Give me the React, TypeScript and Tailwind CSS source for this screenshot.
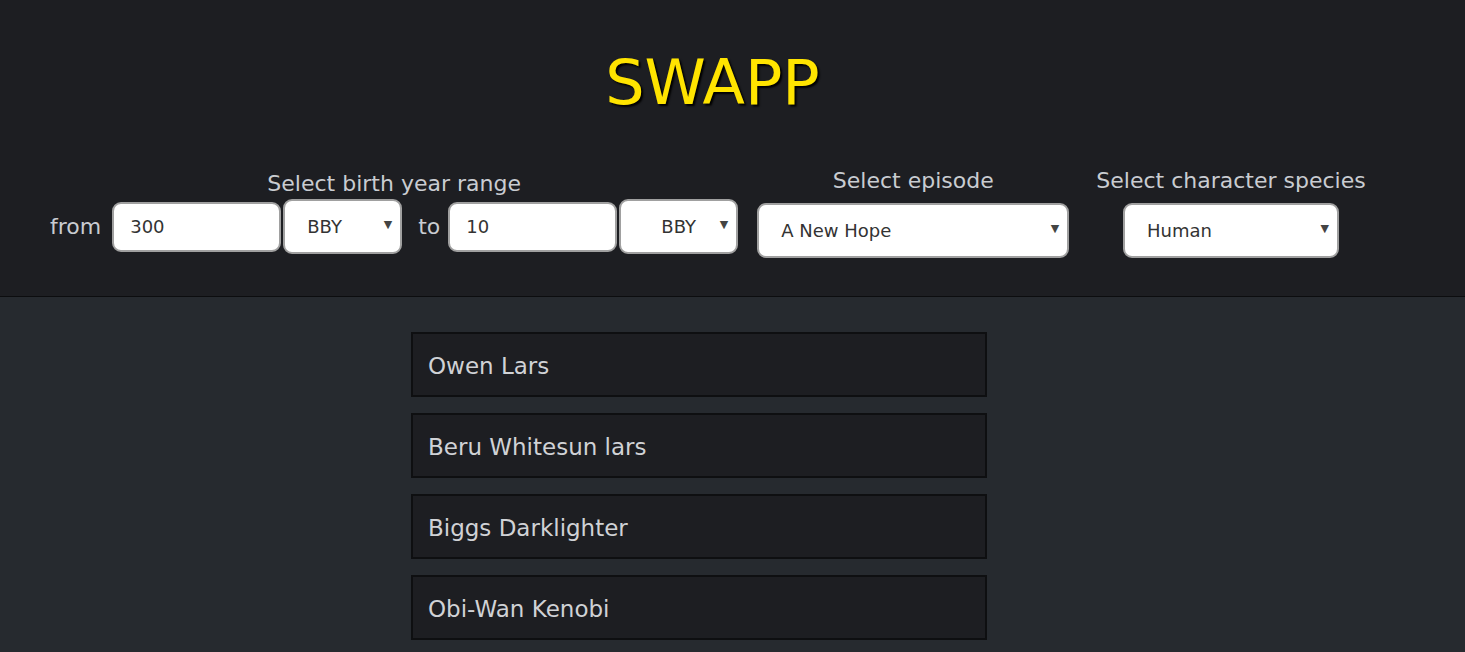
const FONT = "font-['Comic_Sans_MS','DejaVu_Sans',sans-serif]";

const PEOPLE = ['Owen Lars', 'Beru Whitesun lars', 'Biggs Darklighter', 'Obi-Wan Kenobi'];

function Select({ value, className }: { value: string; className: string }) {
  return (
    <div className={`relative flex items-center rounded-[9px] border-2 border-[#a0a0a0] bg-white text-[18px] text-[#333] ${className}`}>
      <span>{value}</span>
      <span className="absolute right-[8px] top-1/2 -translate-y-[58%] text-[11px] text-[#444]">▼</span>
    </div>
  );
}

function Input({ value }: { value: string }) {
  return (
    <div className="flex h-[50px] w-[169px] items-center rounded-[9px] border-2 border-[#a0a0a0] bg-white pl-[16px] text-[18px] text-[#333]">
      {value}
    </div>
  );
}

export default function App() {
  return (
    <div className={`min-h-[652px] bg-[#262a2f] ${FONT}`}>
      <header className="h-[297px] border-b border-[#0c0d0f] bg-[#1d1e22]">
        <h1 className="pr-[40px] pt-[45px] text-center text-[62px] leading-[76px] text-[#ffe400] [text-shadow:2px_2px_2px_#000]">
          SWAPP
        </h1>
        <div className="mt-[48px] flex items-start pl-[50px] text-[#c9ccd1]">
          <div className="flex flex-col items-center">
            <div className="text-[22px] leading-[30px]">Select birth year range</div>
            <div className="flex items-center">
              <span className="mr-[11px] text-[22px]">from</span>
              <Input value="300" />
              <Select value="BBY" className="ml-[2px] h-[55px] w-[119px] pl-[22px]" />
              <span className="ml-[16px] mr-[8px] text-[22px]">to</span>
              <Input value="10" />
              <Select value="BBY" className="ml-[2px] h-[55px] w-[119px] pl-[40px]" />
            </div>
          </div>
          <div className="ml-[19px] flex flex-col items-center">
            <div className="-mt-[3px] text-[22px] leading-[30px]">Select episode</div>
            <Select value="A New Hope" className="mt-[7px] h-[55px] w-[312px] pl-[22px]" />
          </div>
          <div className="ml-[27px] flex flex-col items-center">
            <div className="-mt-[3px] text-[22px] leading-[30px]">Select character species</div>
            <Select value="Human" className="mt-[7px] h-[55px] w-[216px] pl-[22px]" />
          </div>
        </div>
      </header>
      <main className="flex flex-col items-start gap-[16px] pl-[411px] pt-[35px]">
        {PEOPLE.map((p) => (
          <div
            key={p}
            className="flex h-[65px] w-[576px] items-center border-2 border-[#0e0f11] bg-[#1d1e22] pl-[15px] pt-[4px] text-[23px] text-[#d0d2d6]"
          >
            {p}
          </div>
        ))}
      </main>
    </div>
  );
}
